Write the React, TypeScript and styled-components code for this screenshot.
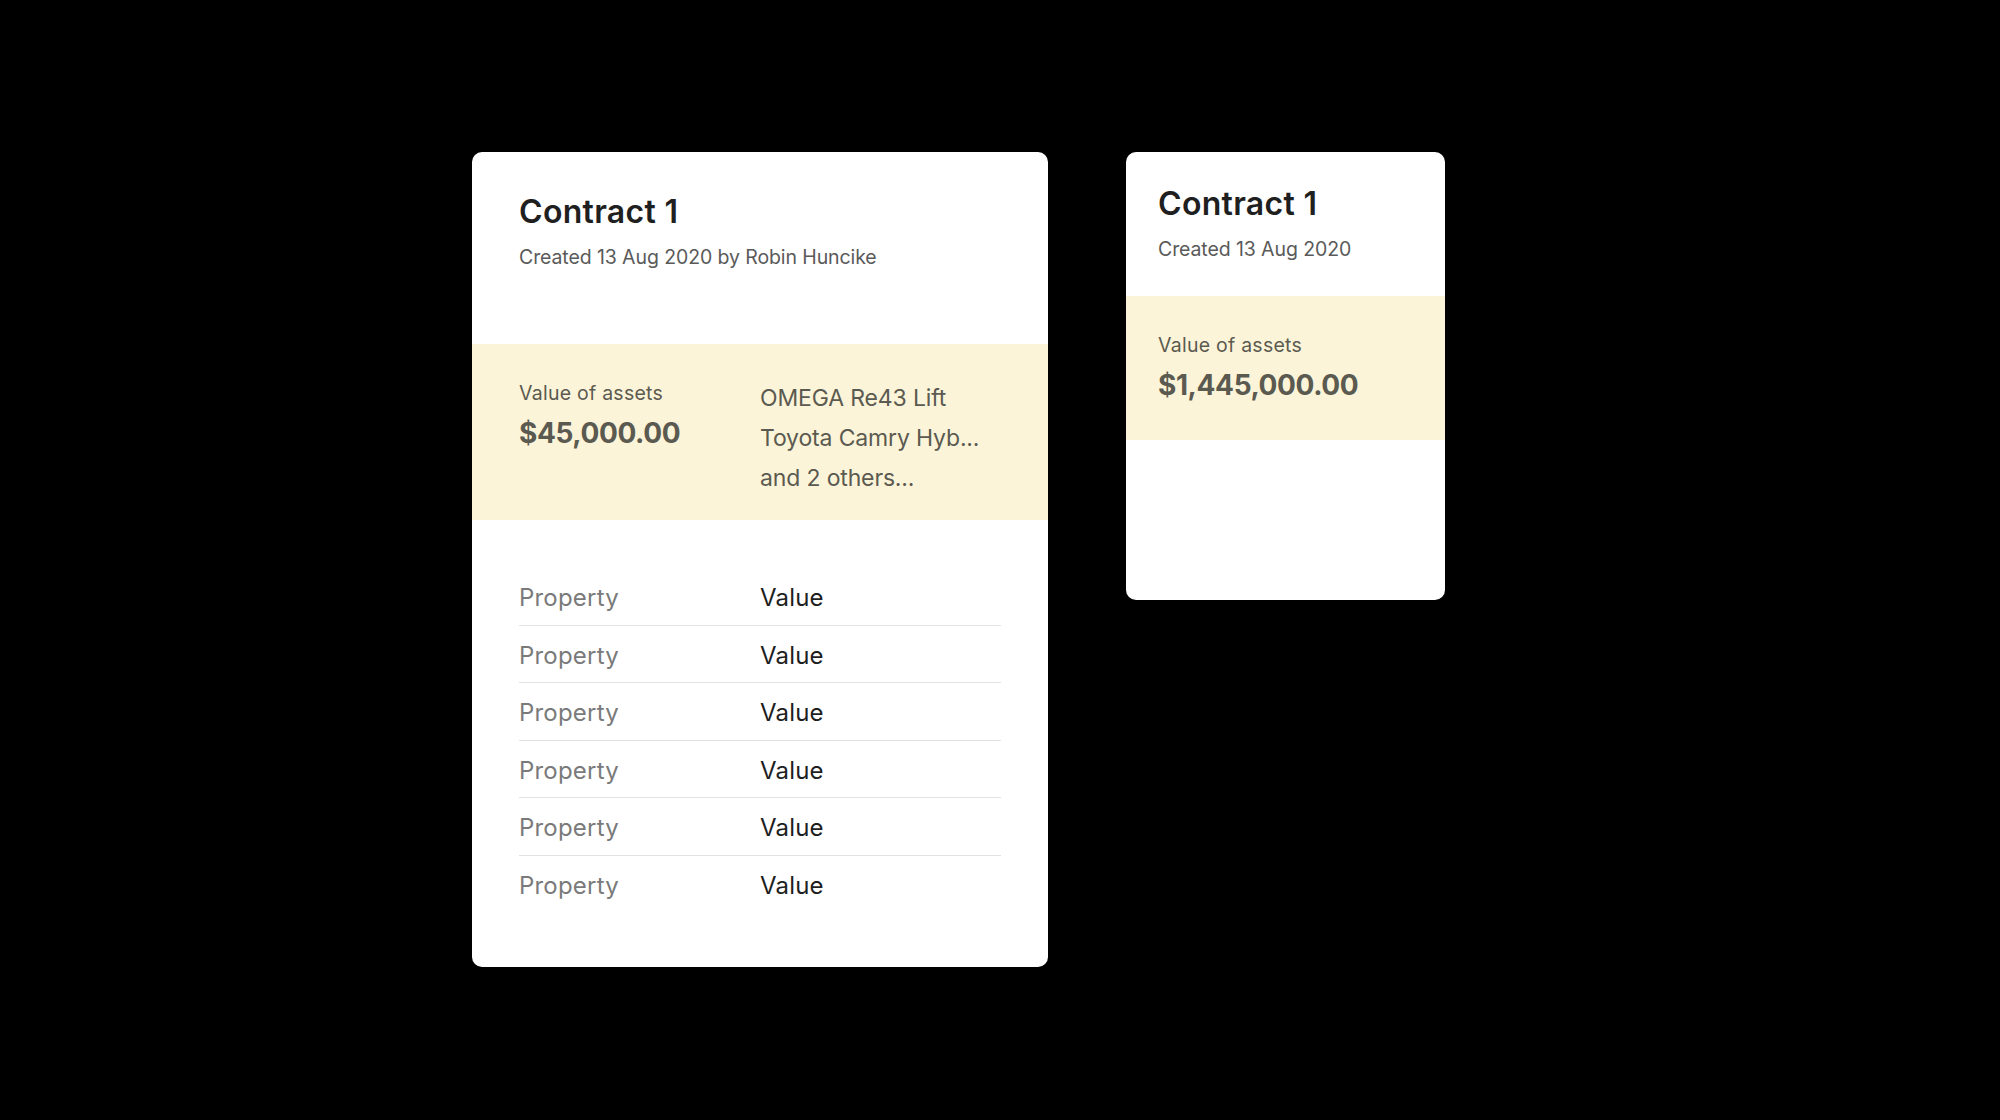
import React from "react"
import styled, { createGlobalStyle } from "styled-components"

const GlobalStyle = createGlobalStyle`
  html, body {
    margin: 0;
    padding: 0;
    background: #000;
  }
  body {
    font-family: Inter, "Noto Sans", "Liberation Sans", sans-serif;
    -webkit-font-smoothing: antialiased;
  }
`

interface Row {
  property: string
  value: string
}

const rows: Row[] = Array.from({ length: 6 }, () => ({ property: "Property", value: "Value" }))

const assets = ["OMEGA Re43 Lift", "Toyota Camry Hyb...", "and 2 others..."]

export default function App() {
  return (
    <>
      <GlobalStyle />
      <Page>
        <Card>
          <Header $size="large">
            <Title>Contract 1</Title>
            <Subtitle>Created 13 Aug 2020 by Robin Huncike</Subtitle>
          </Header>

          <Band $size="large">
            <Summary $offset={2}>
              <SummaryLabel>Value of assets</SummaryLabel>
              <Amount>$45,000.00</Amount>
            </Summary>
            <AssetList>
              {assets.map((a) => (
                <AssetItem key={a}>{a}</AssetItem>
              ))}
            </AssetList>
          </Band>

          <Table>
            {rows.map((r, i) => (
              <TableRow key={i}>
                <PropertyCell>{r.property}</PropertyCell>
                <ValueCell>{r.value}</ValueCell>
              </TableRow>
            ))}
          </Table>
        </Card>

        <Card $small>
          <Header $size="small">
            <Title>Contract 1</Title>
            <Subtitle>Created 13 Aug 2020</Subtitle>
          </Header>
          <Band $size="small">
            <Summary $offset={0}>
              <SummaryLabel>Value of assets</SummaryLabel>
              <Amount>$1,445,000.00</Amount>
            </Summary>
          </Band>
        </Card>
      </Page>
    </>
  )
}

const Page = styled.div`
  display: flex;
  align-items: flex-start;
  gap: 78px;
  padding: 152px 0 0 472px;
  min-height: 1120px;
  box-sizing: border-box;
`

const Card = styled.div<{ $small?: boolean }>`
  background-color: #ffffff;
  border-radius: 10px;
  overflow: hidden;
  width: ${({ $small }) => ($small ? "319px" : "576px")};
  height: ${({ $small }) => ($small ? "448px" : "815px")};
  box-sizing: border-box;
`

const Header = styled.div<{ $size: "large" | "small" }>`
  display: flex;
  flex-direction: column;
  gap: 12px;
  padding: ${({ $size }) => ($size === "large" ? "40px 47px 74px" : "32px 32px 34px")};
`

const Title = styled.h2`
  margin: 0;
  font-size: 32px;
  line-height: 40px;
  font-weight: 600;
  letter-spacing: 0.3px;
  color: #1f1f1f;
`

const Subtitle = styled.div`
  font-size: 19.5px;
  line-height: 26px;
  color: #5a5a5a;
  letter-spacing: -0.1px;
`

const Band = styled.div<{ $size: "large" | "small" }>`
  background-color: #fcf4d8;
  display: grid;
  grid-template-columns: ${({ $size }) => ($size === "large" ? "1fr 1fr" : "1fr")};
  padding: ${({ $size }) => ($size === "large" ? "34px 47px 22px" : "36px 32px 37px")};
  color: #5b5a50;
`

const Summary = styled.div<{ $offset: number }>`
  display: flex;
  flex-direction: column;
  gap: 9px;
  padding-top: ${({ $offset }) => $offset}px;
`

const SummaryLabel = styled.div`
  font-size: 19.5px;
  line-height: 26px;
  letter-spacing: 0.25px;
`

const Amount = styled.div`
  font-size: 28px;
  line-height: 36px;
  font-weight: 700;
  letter-spacing: -0.4px;
`

const AssetList = styled.div`
  display: flex;
  flex-direction: column;
  min-width: 0;
`

const AssetItem = styled.div`
  font-size: 23px;
  line-height: 40px;
  letter-spacing: -0.15px;
  white-space: nowrap;
`

const Table = styled.div`
  display: flex;
  flex-direction: column;
  margin: 48px 47px 0;
`

const TableRow = styled.div`
  display: grid;
  grid-template-columns: 1fr 1fr;
  padding: 14px 0 10.5px;
  border-bottom: 1px solid #e2e2e2;
  font-size: 24px;
  line-height: 32px;
  letter-spacing: 0.2px;

  &:last-child {
    border-bottom: none;
  }
`

const PropertyCell = styled.span`
  color: #7a7a7a;
`

const ValueCell = styled.span`
  color: #1e1e1e;
`
